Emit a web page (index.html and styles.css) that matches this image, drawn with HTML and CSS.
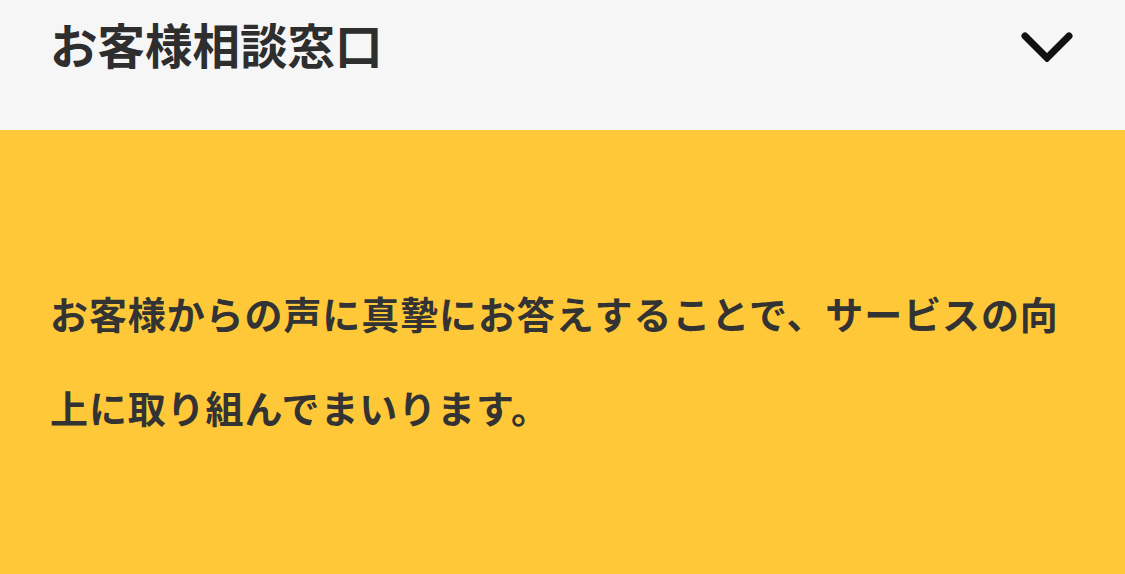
FILE: index.html
```html
<!DOCTYPE html>
<html lang="ja">
<head>
<meta charset="utf-8">
<link rel="stylesheet" href="styles.css">
</head>
<body>
<header class="head">
  <h1 class="title">お客様相談窓口</h1>
  <svg class="chev" viewBox="0 0 52 30" width="52" height="30"><path d="M4 4 L26 26 L48 4" fill="none" stroke="#111" stroke-width="7" stroke-linecap="round" stroke-linejoin="miter"/></svg>
</header>
<section class="panel">
  <p class="msg">お客様からの声に真摯にお答えすることで、サービスの向上に取り組んでまいります。</p>
</section>
</body>
</html>
```
FILE: styles.css
```css
html, body { margin: 0; padding: 0; }
body {
  width: 1125px;
  height: 574px;
  overflow: hidden;
  font-family: "Noto Sans CJK JP", "Noto Sans", sans-serif;
  color: #333;
  background: #ffc839;
}
.head {
  height: 130px;
  background: #f6f6f6;
  display: flex;
  align-items: flex-start;
  justify-content: space-between;
  padding: 0 52px 0 50px;
  box-sizing: border-box;
}
.title {
  margin: 14px 0 0 0;
  font-size: 47.5px;
  line-height: 60px;
  font-weight: 700;
  color: #2e2e2e;
}
.chev { margin-top: 32px; }
.panel {
  padding: 0 50px;
  background: #ffc839;
}
.msg {
  margin: 0;
  padding-top: 136px;
  font-size: 38px;
  line-height: 94px;
  font-weight: 700;
  letter-spacing: 0.9px;
  color: #333;
  width: 1020px;
}
```
